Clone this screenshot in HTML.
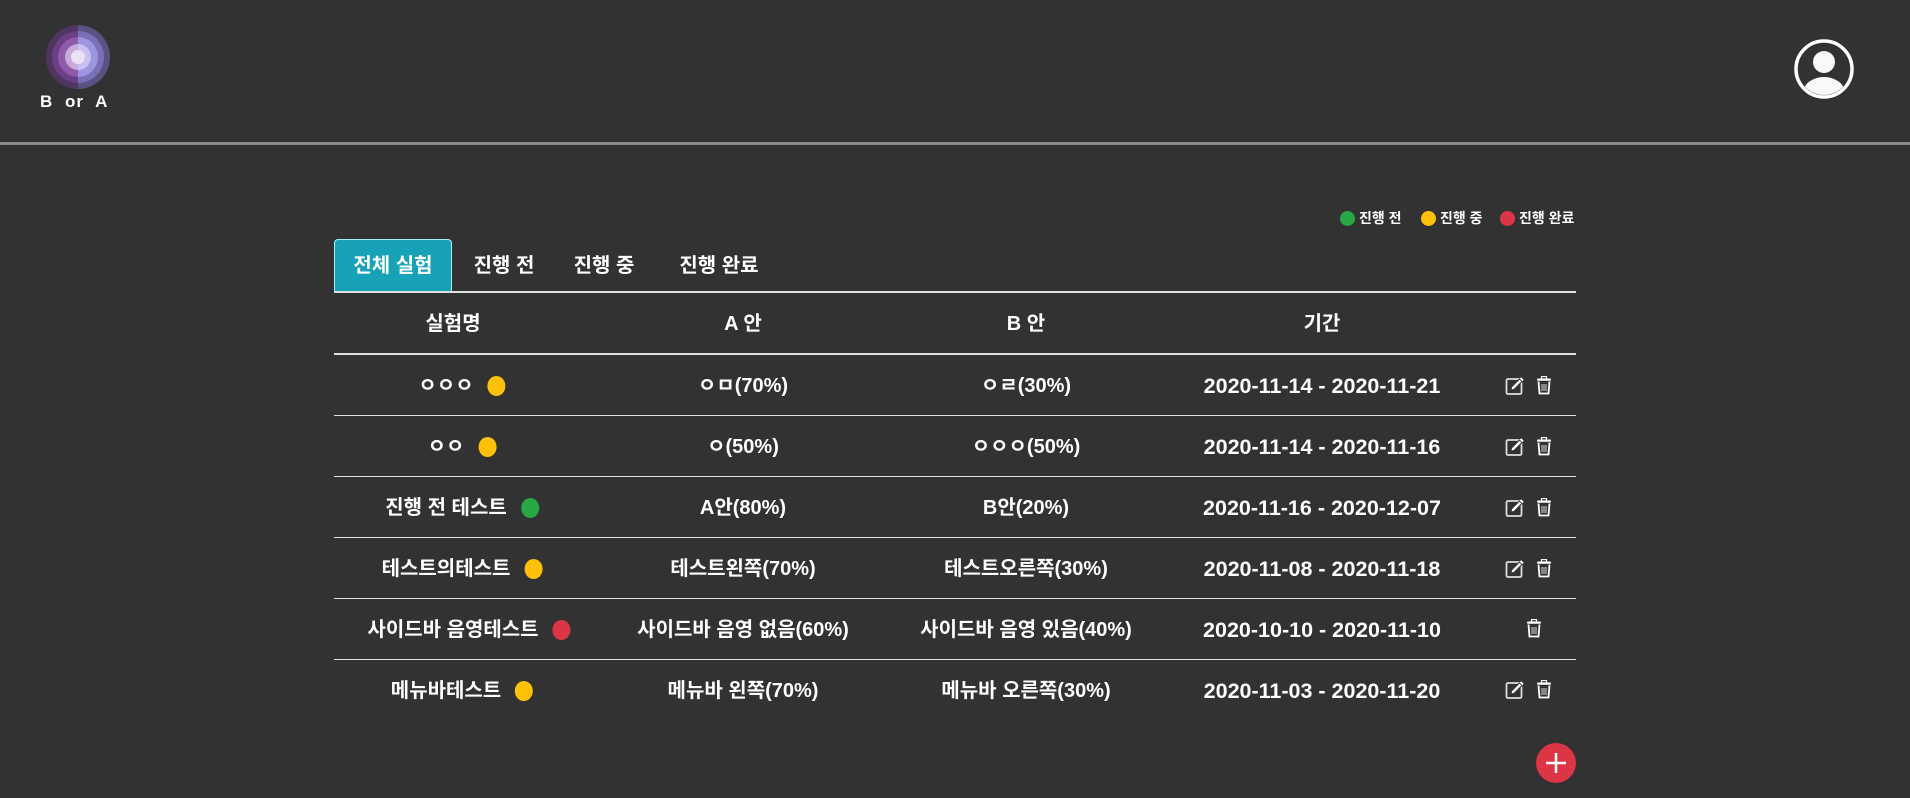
<!DOCTYPE html>
<html><head><meta charset="utf-8"><style>
*{margin:0;padding:0;box-sizing:border-box}
body{width:1910px;height:798px;background:#323232;color:#fff;font-family:"Liberation Sans","Noto Sans CJK KR",sans-serif;font-weight:bold;position:relative;overflow:hidden}
.abs{position:absolute}
.hl{position:absolute;left:0;width:1910px;top:142px;height:3px;background:#8a8a8a}
.line{position:absolute;left:334px;width:1242px;height:1px;background:#e0e0e0}
.cell{position:absolute;transform:translateX(-50%);white-space:nowrap;font-size:20px;line-height:24px}
.dt{font-size:21.5px}
.dot{display:inline-block;width:18px;height:20px;border-radius:50%;vertical-align:-4px;margin-left:14px}
.g{background:#28a745}.y{background:#ffc107}.r{background:#dc3545}
.tab{position:absolute;top:240px;height:53px;line-height:53px;font-size:20px;text-align:center}
.leg{font-size:14px;position:absolute;top:208px;white-space:nowrap}
.leg .dot{width:15px;height:15px;margin-left:0;margin-right:4px;vertical-align:-3px}
</style></head><body>
<svg class="abs" style="left:46px;top:25px" width="64" height="64" viewBox="0 0 64 64">
<defs><clipPath id="l"><rect x="0" y="0" width="32" height="64"/></clipPath><clipPath id="rr"><rect x="32" y="0" width="32" height="64"/></clipPath></defs>
<g clip-path="url(#l)"><circle cx="32" cy="32" r="32" fill="#4f3560"/><circle cx="32" cy="32" r="26" fill="#6b3f85"/><circle cx="32" cy="32" r="20" fill="#8f5aa8"/><circle cx="32" cy="32" r="13" fill="#c9a9d8"/></g>
<g clip-path="url(#rr)"><circle cx="32" cy="32" r="32" fill="#5a5280"/><circle cx="32" cy="32" r="26" fill="#7a70b8"/><circle cx="32" cy="32" r="20" fill="#9e95e0"/><circle cx="32" cy="32" r="13" fill="#c8c0f0"/></g>
<circle cx="32" cy="32" r="7" fill="#e8e2f2"/></svg>
<div class="abs" style="left:40px;top:92px;font-size:17px;font-family:'Liberation Sans',sans-serif;font-weight:900;letter-spacing:1px;word-spacing:6px">B or A</div>
<svg class="abs" style="left:1794px;top:39px" width="60" height="60" viewBox="0 0 60 60">
<circle cx="30" cy="30" r="28" fill="none" stroke="#fff" stroke-width="3.5"/>
<circle cx="30" cy="23" r="11" fill="#f8f9fa"/>
<clipPath id="c"><circle cx="30" cy="30" r="26"/></clipPath>
<ellipse cx="30" cy="54" rx="21" ry="16" fill="#f8f9fa" clip-path="url(#c)"/></svg>
<div class="hl"></div>
<div class="leg" style="left:1340px"><span class="dot g"></span>진행 전</div>
<div class="leg" style="left:1421px"><span class="dot y"></span>진행 중</div>
<div class="leg" style="left:1500px"><span class="dot r"></span>진행 완료</div>
<div class="tab" style="left:334px;width:118px;top:239px;background:#17a2b8;border:1px solid #aee;border-bottom:none;border-radius:4px 4px 0 0">전체 실험</div>
<div class="tab" style="left:460px;width:88px">진행 전</div>
<div class="tab" style="left:560px;width:88px">진행 중</div>
<div class="tab" style="left:664px;width:110px">진행 완료</div>
<div class="line" style="top:291px;height:2px"></div>
<div class="cell" style="left:453px;top:312px">실험명</div>
<div class="cell" style="left:743px;top:312px">A 안</div>
<div class="cell" style="left:1026px;top:312px">B 안</div>
<div class="cell" style="left:1322px;top:312px">기간</div>
<div class="line" style="top:353px;height:2px"></div>
<div class="line" style="top:415px"></div>
<div class="line" style="top:476px"></div>
<div class="line" style="top:537px"></div>
<div class="line" style="top:598px"></div>
<div class="line" style="top:659px"></div>

<div class="cell" style="left:462px;top:374px">ㅇㅇㅇ<span class="dot y"></span></div>
<div class="cell" style="left:743px;top:374px">ㅇㅁ(70%)</div>
<div class="cell" style="left:1026px;top:374px">ㅇㄹ(30%)</div>
<div class="cell dt" style="left:1322px;top:374px">2020-11-14 - 2020-11-21</div>

<div class="cell" style="left:462px;top:435px">ㅇㅇ<span class="dot y"></span></div>
<div class="cell" style="left:743px;top:435px">ㅇ(50%)</div>
<div class="cell" style="left:1026px;top:435px">ㅇㅇㅇ(50%)</div>
<div class="cell dt" style="left:1322px;top:435px">2020-11-14 - 2020-11-16</div>

<div class="cell" style="left:462px;top:496px">진행 전 테스트<span class="dot g"></span></div>
<div class="cell" style="left:743px;top:496px">A안(80%)</div>
<div class="cell" style="left:1026px;top:496px">B안(20%)</div>
<div class="cell dt" style="left:1322px;top:496px">2020-11-16 - 2020-12-07</div>

<div class="cell" style="left:462px;top:557px">테스트의테스트<span class="dot y"></span></div>
<div class="cell" style="left:743px;top:557px">테스트왼쪽(70%)</div>
<div class="cell" style="left:1026px;top:557px">테스트오른쪽(30%)</div>
<div class="cell dt" style="left:1322px;top:557px">2020-11-08 - 2020-11-18</div>

<div class="cell" style="left:469px;top:618px">사이드바 음영테스트<span class="dot r"></span></div>
<div class="cell" style="left:743px;top:618px">사이드바 음영 없음(60%)</div>
<div class="cell" style="left:1026px;top:618px">사이드바 음영 있음(40%)</div>
<div class="cell dt" style="left:1322px;top:618px">2020-10-10 - 2020-11-10</div>

<div class="cell" style="left:462px;top:679px">메뉴바테스트<span class="dot y"></span></div>
<div class="cell" style="left:743px;top:679px">메뉴바 왼쪽(70%)</div>
<div class="cell" style="left:1026px;top:679px">메뉴바 오른쪽(30%)</div>
<div class="cell dt" style="left:1322px;top:679px">2020-11-03 - 2020-11-20</div>

<svg width="0" height="0" style="position:absolute"><defs>
<g id="ed"><rect x="1.5" y="3" width="15" height="15" rx="1.5" fill="none" stroke="#ddd" stroke-width="1.8"/><path d="M6 14 L6.5 11 L14.5 3 L17 5.5 L9 13.5 Z" fill="#fff" stroke="#323232" stroke-width="1"/><path d="M15.5 2 L18 4.5" stroke="#fff" stroke-width="2"/></g>
<g id="tr"><rect x="2" y="2.5" width="14" height="2.2" rx="1" fill="#fff"/><rect x="6.5" y="0.5" width="5" height="2.5" fill="none" stroke="#fff" stroke-width="1.2"/><path d="M3.5 5.5 L4.5 17.5 L13.5 17.5 L14.5 5.5" fill="none" stroke="#fff" stroke-width="1.8"/><path d="M7 8v7M9 8v7M11 8v7" stroke="#bbb" stroke-width="1.2"/></g>
</defs></svg>
<svg class="abs" style="left:1505px;top:376px" width="20" height="20"><use href="#ed"/></svg><svg class="abs" style="left:1535px;top:376px" width="18" height="20"><use href="#tr"/></svg>
<svg class="abs" style="left:1505px;top:437px" width="20" height="20"><use href="#ed"/></svg><svg class="abs" style="left:1535px;top:437px" width="18" height="20"><use href="#tr"/></svg>
<svg class="abs" style="left:1505px;top:498px" width="20" height="20"><use href="#ed"/></svg><svg class="abs" style="left:1535px;top:498px" width="18" height="20"><use href="#tr"/></svg>
<svg class="abs" style="left:1505px;top:559px" width="20" height="20"><use href="#ed"/></svg><svg class="abs" style="left:1535px;top:559px" width="18" height="20"><use href="#tr"/></svg>
<svg class="abs" style="left:1525px;top:619px" width="18" height="20"><use href="#tr"/></svg>
<svg class="abs" style="left:1505px;top:680px" width="20" height="20"><use href="#ed"/></svg><svg class="abs" style="left:1535px;top:680px" width="18" height="20"><use href="#tr"/></svg>
<svg class="abs" style="left:1536px;top:743px" width="40" height="40"><circle cx="20" cy="20" r="20" fill="#dc3545"/><path d="M20 10v20M10 20h20" stroke="#fff" stroke-width="2.5"/></svg>
</body></html>
